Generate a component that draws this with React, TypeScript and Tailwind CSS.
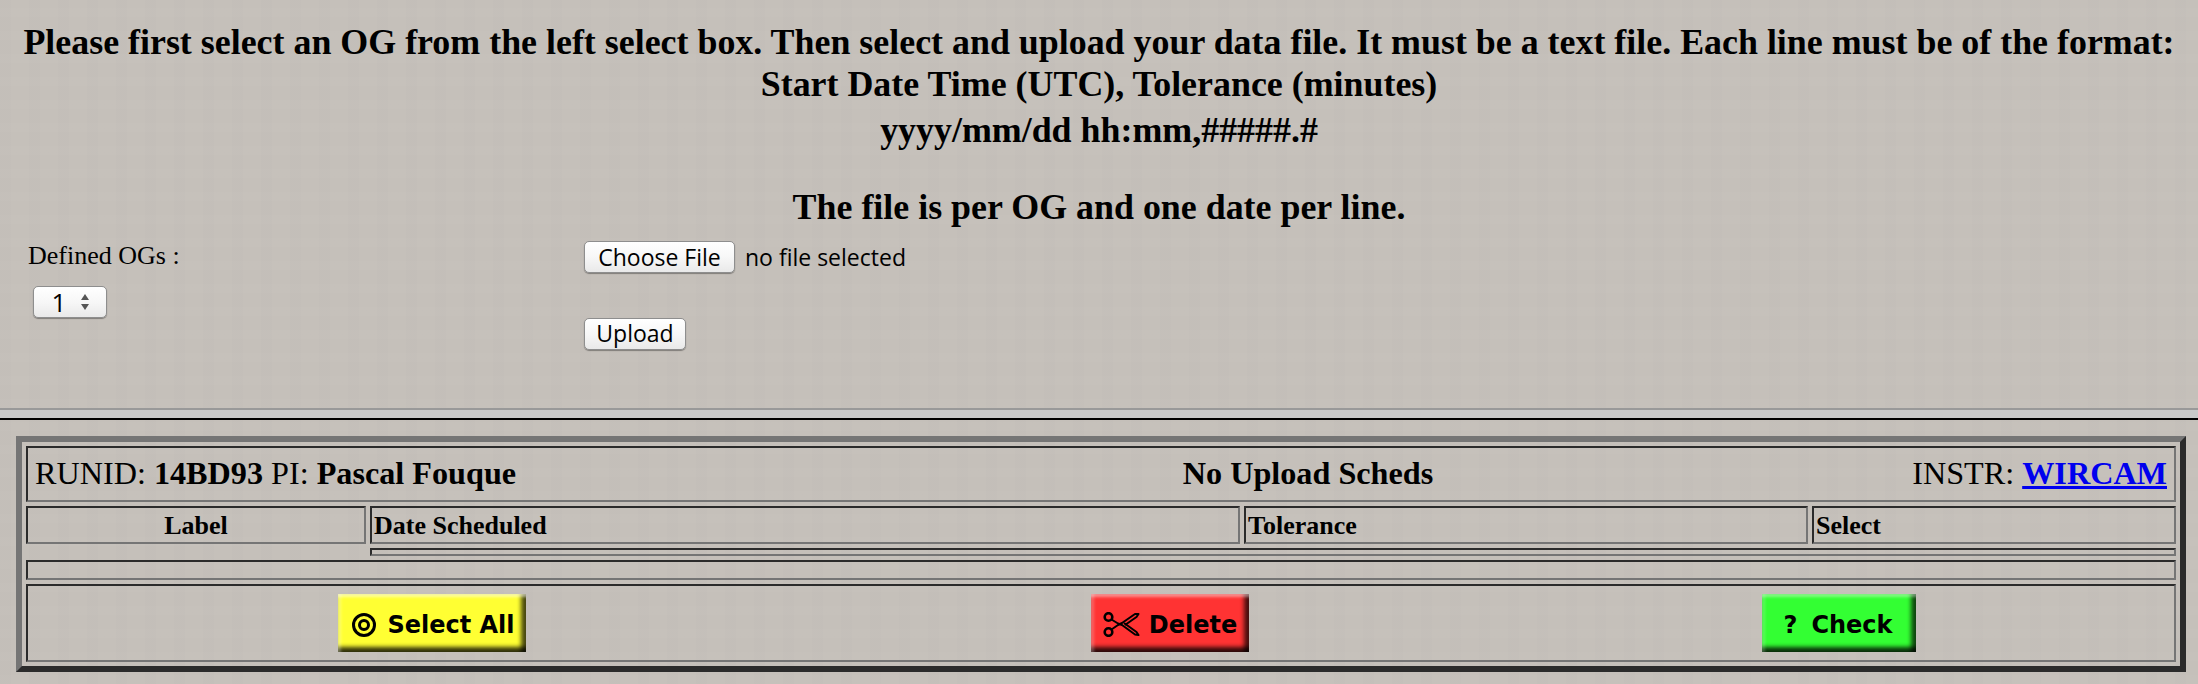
const macButton =
  'h-8 rounded-[5px] border border-[#8e8e8e] bg-gradient-to-b from-white via-[#f7f7f7] to-[#e9e9e9] shadow-[0_1px_1px_rgba(0,0,0,0.35)] text-black text-[23px] leading-none font-["Open_Sans",sans-serif] flex items-center justify-center'

const cell = 'border-2 border-t-[#2b2b2b] border-l-[#2b2b2b] border-r-[#757575] border-b-[#757575]'

const bevel =
  'h-[58px] flex items-center justify-center text-black font-["DejaVu_Sans",sans-serif] font-bold text-[24px] leading-none'

export default function App() {
  return (
    <div className='min-h-[684px] w-[2198px] overflow-hidden bg-[#c5c0ba] bg-[image:repeating-linear-gradient(0deg,rgba(255,255,255,0.015)_0_9px,transparent_9px_23px),repeating-linear-gradient(90deg,rgba(0,0,0,0.008)_0_11px,transparent_11px_29px)] text-black font-["Liberation_Serif",serif]'>
      {/* instructions */}
      <div className="pt-[22px] text-center font-bold text-[35.9px] leading-[41.5px]">
        <p>
          Please first select an OG from the left select box. Then select and upload your data file. It must be a text
          file. Each line must be of the format:
        </p>
        <p>Start Date Time (UTC), Tolerance (minutes)</p>
        <p className="mt-[5px]">yyyy/mm/dd hh:mm,#####.#</p>
        <p className="mt-[35px]">The file is per OG and one date per line.</p>
      </div>

      {/* upload form */}
      <div className="mt-[13px] flex h-[167px] items-start">
        <div className="w-[584px] pl-[28px]">
          <div className="text-[26px] leading-8 -mt-px">Defined OGs :</div>
          <div className={`${macButton} mt-[14px] ml-[5px] w-[74px] pl-[2px] gap-[14px] text-[26px]`}>
            <span>1</span>
            <svg width="10" height="18" viewBox="0 0 10 18" fill="#555">
              <path d="M5 1 L9 7 H1 Z" />
              <path d="M5 17 L9 11 H1 Z" />
            </svg>
          </div>
        </div>
        <div className="-mt-px">
          <div className="flex items-center">
            <button className={`${macButton} w-[151px]`}>Choose File</button>
            <span className='ml-[10px] text-[23px] font-["Open_Sans",sans-serif]'>no file selected</span>
          </div>
          <button className={`${macButton} mt-[43px] w-[102px] text-[22px]`}>Upload</button>
        </div>
      </div>

      {/* hr */}
      <div className="h-[2px] bg-[#999999]" />
      <div className="h-2 bg-[#c9c9c9]" />
      <div className="h-[2px] bg-black" />

      {/* schedule table */}
      <div className="mt-4 ml-4 w-[2170px] h-[236px] border-[6px] border-t-[#757575] border-l-[#757575] border-r-[#2b2b2b] border-b-[#2b2b2b] px-1 py-1 flex flex-col gap-1">
        <div className={`${cell} h-[56px] flex items-center px-[7px] pb-[2px] text-[32.2px]`}>
          <div className="w-[1006px]">
            RUNID: <b>14BD93</b> PI: <b>Pascal Fouque</b>
          </div>
          <div className="w-[534px] text-center font-bold">No Upload Scheds</div>
          <div className="flex-1 text-right">
            INSTR:{' '}
            <a href="#" className="font-bold text-[#0000ee] underline">
              WIRCAM
            </a>
          </div>
        </div>

        <div>
          <div className="flex gap-[4px] text-[26px] font-bold">
            <div className={`${cell} w-[340px] h-[38px] flex items-center justify-center`}>Label</div>
            <div className={`${cell} w-[870px] h-[38px] flex items-center px-[2px]`}>Date Scheduled</div>
            <div className={`${cell} w-[564px] h-[38px] flex items-center px-[2px]`}>Tolerance</div>
            <div className={`${cell} flex-1 h-[38px] flex items-center px-[2px]`}>Select</div>
          </div>
          <div className={`${cell} ml-[344px] mt-[4px] h-2`} />
        </div>

        <div className={`${cell} h-5`} />

        <div className={`${cell} h-[78px] flex items-center`}>
          <div className="ml-[310px] w-[188px]">
            <div
              className={`${bevel} gap-[10px] pl-[2px] pt-[3px] bg-[#ffff33] shadow-[inset_0_5px_3px_-2px_rgba(255,255,255,0.55),inset_5px_0_3px_-2px_rgba(255,255,255,0.3),inset_-7px_0_4px_-2px_rgba(0,0,0,0.7),inset_0_-7px_4px_-2px_rgba(0,0,0,0.8)]`}
            >
              <svg width="26" height="26" viewBox="0 0 26 26" fill="none" stroke="black" strokeWidth="3">
                <circle cx="13" cy="13" r="10.5" />
                <circle cx="13" cy="13" r="4.5" />
              </svg>
              <span>Select All</span>
            </div>
          </div>
          <div className="ml-[565px] w-[158px]">
            <div
              className={`${bevel} gap-[9px] pt-[3px] bg-[#ff3333] shadow-[inset_0_5px_3px_-2px_rgba(255,255,255,0.45),inset_5px_0_3px_-2px_rgba(255,255,255,0.25),inset_-7px_0_4px_-2px_rgba(0,0,0,0.7),inset_0_-7px_4px_-2px_rgba(0,0,0,0.8)]`}
            >
              <svg width="37" height="25" viewBox="0 0 37 25" fill="none" stroke="black" strokeWidth="2" strokeLinejoin="round">
                <circle cx="5.5" cy="5" r="3.8" strokeWidth="2.6" />
                <circle cx="5.5" cy="20" r="3.8" strokeWidth="2.6" />
                <path d="M8.5 7.5 L15 11.5 L19 13 L32 22.5 L35.5 23 L33.5 20 L21 11" />
                <path d="M8.5 17.5 L15 13 L19 11 L32 2 L35.5 2 L33.5 5 L22 13" />
              </svg>
              <span>Delete</span>
            </div>
          </div>
          <div className="ml-[513px] w-[154px]">
            <div
              className={`${bevel} gap-[14px] pr-[2px] pt-[3px] bg-[#33ff33] shadow-[inset_0_5px_3px_-2px_rgba(255,255,255,0.4),inset_5px_0_3px_-2px_rgba(255,255,255,0.2),inset_-7px_0_4px_-2px_rgba(0,0,0,0.7),inset_0_-7px_4px_-2px_rgba(0,0,0,0.8)]`}
            >
              <span>?</span>
              <span>Check</span>
            </div>
          </div>
        </div>
      </div>
    </div>
  )
}
